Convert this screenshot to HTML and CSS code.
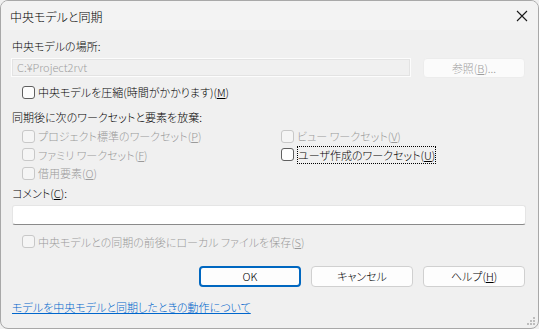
FILE: index.html
```html
<!DOCTYPE html>
<html>
<head>
    <title>中央モデルと同期</title>
    <link rel="stylesheet" href="styles.css">
</head>
<body>
    <div class="window">
        <div class="titlebar">
            <span class="title">中央モデルと同期</span>
            <svg class="close" width="12" height="12" viewBox="0 0 12 12">
                <path d="M1 1 L11 11 M11 1 L1 11" stroke="#1a1a1a" stroke-width="1.1" fill="none"/>
            </svg>
        </div>
        <div class="content">
            <div class="label first">中央モデルの場所:</div>
            <div class="path-row">
                <div class="path-box">C:¥Project2rvt</div>
                <div class="btn disabled">参照(<u>B</u>)...</div>
            </div>
            <div class="check-row compress">
                <span class="cb"></span><span>中央モデルを圧縮(時間がかかります)(<u>M</u>)</span>
            </div>
            <div class="label discard">同期後に次のワークセットと要素を放棄:</div>
            <div class="ws-grid">
                <div class="check-row off"><span class="cb"></span><span>プロジェクト標準のワークセット(<u>P</u>)</span></div>
                <div class="check-row off right"><span class="cb"></span><span>ビュー ワークセット(<u>V</u>)</span></div>
                <div class="check-row off"><span class="cb"></span><span>ファミリ ワークセット(<u>F</u>)</span></div>
                <div class="check-row right"><span class="cb"></span><span class="focus">ユーザ作成のワークセット(<u>U</u>)</span></div>
                <div class="check-row off"><span class="cb"></span><span>借用要素(<u>O</u>)</span></div>
            </div>
            <div class="label comment-label">コメント(<u>C</u>):</div>
            <div class="comment-box"></div>
            <div class="check-row off save"><span class="cb"></span><span>中央モデルとの同期の前後にローカル ファイルを保存(<u>S</u>)</span></div>
            <div class="buttons">
                <div class="btn default">OK</div>
                <div class="btn">キャンセル</div>
                <div class="btn">ヘルプ(<u>H</u>)</div>
            </div>
            <a href="#" class="help-link">モデルを中央モデルと同期したときの動作について</a>
        </div>
        <svg class="grip" width="10" height="10" viewBox="0 0 10 10">
            <rect x="7" y="1" width="2" height="2" fill="#bdbdbd"/>
            <rect x="4" y="4" width="2" height="2" fill="#bdbdbd"/>
            <rect x="7" y="4" width="2" height="2" fill="#bdbdbd"/>
            <rect x="1" y="7" width="2" height="2" fill="#bdbdbd"/>
            <rect x="4" y="7" width="2" height="2" fill="#bdbdbd"/>
            <rect x="7" y="7" width="2" height="2" fill="#bdbdbd"/>
        </svg>
    </div>
</body>
</html>
```

FILE: styles.css
```css
body {
    margin: 0;
    background-color: #f0f0f0;
    font-family: "Noto Sans CJK JP", "Noto Sans", sans-serif;
    font-size: 11px;
    font-weight: 300;
    font-feature-settings: "palt";
    color: #000;
}

.window {
    position: relative;
    width: 539px;
    height: 329px;
    box-sizing: border-box;
    border: 1px solid #a8a8a8;
    border-radius: 8px;
    background-color: #f0f0f0;
    overflow: hidden;
}

.titlebar {
    height: 29px;
    background-color: #f3f3f3;
    display: flex;
    align-items: center;
    justify-content: space-between;
    padding: 0 10px 0 9px;
}

.title {
    font-size: 12px;
    line-height: 16px;
    margin-top: 2px;
}

.close {
    margin-top: 1px;
}

.content {
    padding: 0 13px 0 10px;
}

.label {
    line-height: 18px;
    padding-left: 1px;
}

.label.first {
    margin-top: 7px;
}

.path-row {
    display: flex;
    justify-content: space-between;
    margin-top: 3px;
    height: 20px;
}

.path-box {
    width: 400px;
    height: 19px;
    box-sizing: border-box;
    border: 1px solid #fcfcfc;
    outline: 1px solid #e3e3e3;
    outline-offset: -2px;
    padding: 0 5px;
    line-height: 16px;
    color: #a0a0a0;
}

.btn {
    width: 102px;
    height: 20px;
    box-sizing: border-box;
    border: 1px solid #d0d0d0;
    border-radius: 4px;
    background-color: #fdfdfd;
    text-align: center;
    line-height: 18px;
}

.btn.disabled {
    color: #9d9d9d;
    border-color: #ececec;
    background-color: #fbfbfb;
}

.btn.default {
    border: 2px solid #0067c0;
    line-height: 16px;
}

.check-row {
    display: flex;
    align-items: center;
    line-height: 18px;
    padding-left: 11px;
}

.cb {
    width: 13px;
    height: 13px;
    box-sizing: border-box;
    border: 1px solid #5f5f5f;
    border-radius: 3px;
    background-color: #fdfdfd;
    margin-right: 3px;
    flex-shrink: 0;
}

.check-row.off {
    color: #9a9a9a;
}

.check-row.off .cb {
    border-color: #c8c8c8;
    background-color: #f5f5f5;
}

.compress {
    margin-top: 5px;
}

.label.discard {
    margin-top: 7px;
}

.ws-grid {
    display: grid;
    grid-template-columns: 270px 1fr;
    grid-auto-rows: 18.5px;
    margin-top: 1px;
}

.check-row.right {
    padding-left: 0;
}

.focus {
    outline: 1px dotted #000;
    outline-offset: -1px;
    padding: 0 1px;
}

.label.comment-label {
    margin-top: 1px;
}

.comment-box {
    margin: 3px -1px 0 1px;
    height: 20px;
    box-sizing: border-box;
    background-color: #fff;
    border: 1px solid #e5e5e5;
    border-bottom-color: #8a8a8a;
    border-radius: 3px;
}

.save {
    margin-top: 8px;
}

.buttons {
    display: flex;
    justify-content: flex-end;
    gap: 10px;
    margin-top: 15px;
}

.buttons .btn {
    height: 21px;
}

.help-link {
    display: inline-block;
    margin-top: 11px;
    margin-left: 1px;
    line-height: 18px;
    color: #0066cc;
}

.grip {
    position: absolute;
    right: 2px;
    bottom: 2px;
}
```
